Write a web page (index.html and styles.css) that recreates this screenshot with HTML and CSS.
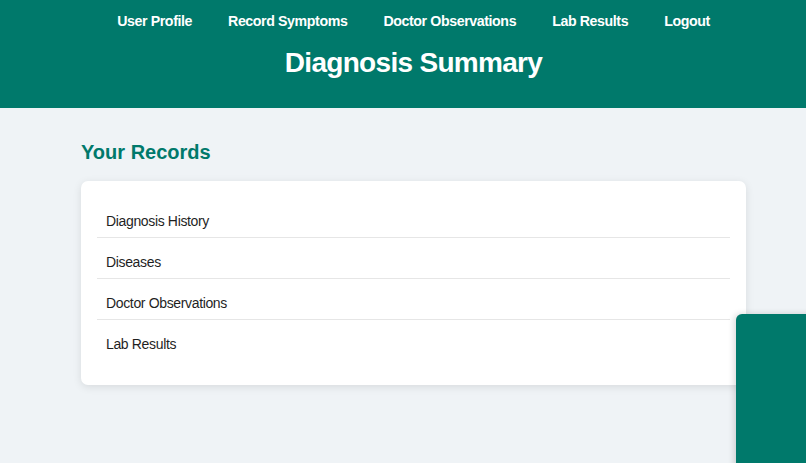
FILE: index.html
```html
<!DOCTYPE html>
<html lang="en">
<head>
<meta charset="utf-8">
<title>Diagnosis Summary</title>
<link rel="stylesheet" href="styles.css">
</head>
<body>
<div class="page">
  <header class="header">
    <nav class="nav">
      <a href="#">User Profile</a>
      <a href="#">Record Symptoms</a>
      <a href="#">Doctor Observations</a>
      <a href="#">Lab Results</a>
      <a href="#">Logout</a>
    </nav>
    <h1 class="title">Diagnosis Summary</h1>
  </header>
  <main class="main">
    <h2 class="section-title">Your Records</h2>
    <ul class="card">
      <li>Diagnosis History</li>
      <li>Diseases</li>
      <li>Doctor Observations</li>
      <li>Lab Results</li>
    </ul>
  </main>
</div>
<div class="widget"></div>
</body>
</html>
```
FILE: styles.css
```css
html, body {
  margin: 0;
  padding: 0;
  overflow: hidden;
  height: 100%;
}
body {
  background: #eff3f6;
  font-family: "Liberation Sans", Arial, sans-serif;
  color: #222;
}
.page {
  width: 827px;
}
.header {
  background: #00796b;
  height: 108px;
  box-sizing: border-box;
  padding-top: 13px;
  text-align: center;
}
.nav {
  display: flex;
  justify-content: center;
  gap: 36px;
}
.nav a {
  color: #fff;
  text-decoration: none;
  font-weight: bold;
  font-size: 14.2px;
  letter-spacing: -0.4px;
  line-height: 17px;
}
.title {
  margin: 17px 0 0;
  color: #fff;
  font-size: 28px;
  letter-spacing: -0.7px;
  line-height: 32px;
  font-weight: bold;
}
.main {
  width: 665px;
  margin: 0 auto;
  padding-top: 31px;
}
.section-title {
  margin: 0 0 16px;
  color: #00796b;
  font-size: 20px;
  line-height: 26px;
  font-weight: bold;
}
.card {
  list-style: none;
  margin: 0;
  background: #fff;
  border-radius: 7px;
  box-shadow: 0 2px 8px rgba(0, 0, 0, 0.1);
  padding: 20px 16px 21px;
}
.card li {
  font-size: 14px;
  letter-spacing: -0.35px;
  line-height: 16px;
  padding: 12px 9px 8px;
  margin-bottom: 4px;
  border-bottom: 1px solid #e6e6e6;
  color: #1f1f1f;
}
.card li:last-child {
  border-bottom: none;
}
.widget {
  position: fixed;
  left: 736px;
  top: 314px;
  width: 120px;
  height: 200px;
  background: #00796b;
  border-radius: 6px 0 0 0;
  box-shadow: -2px 0 6px rgba(0, 0, 0, 0.15);
}
```
